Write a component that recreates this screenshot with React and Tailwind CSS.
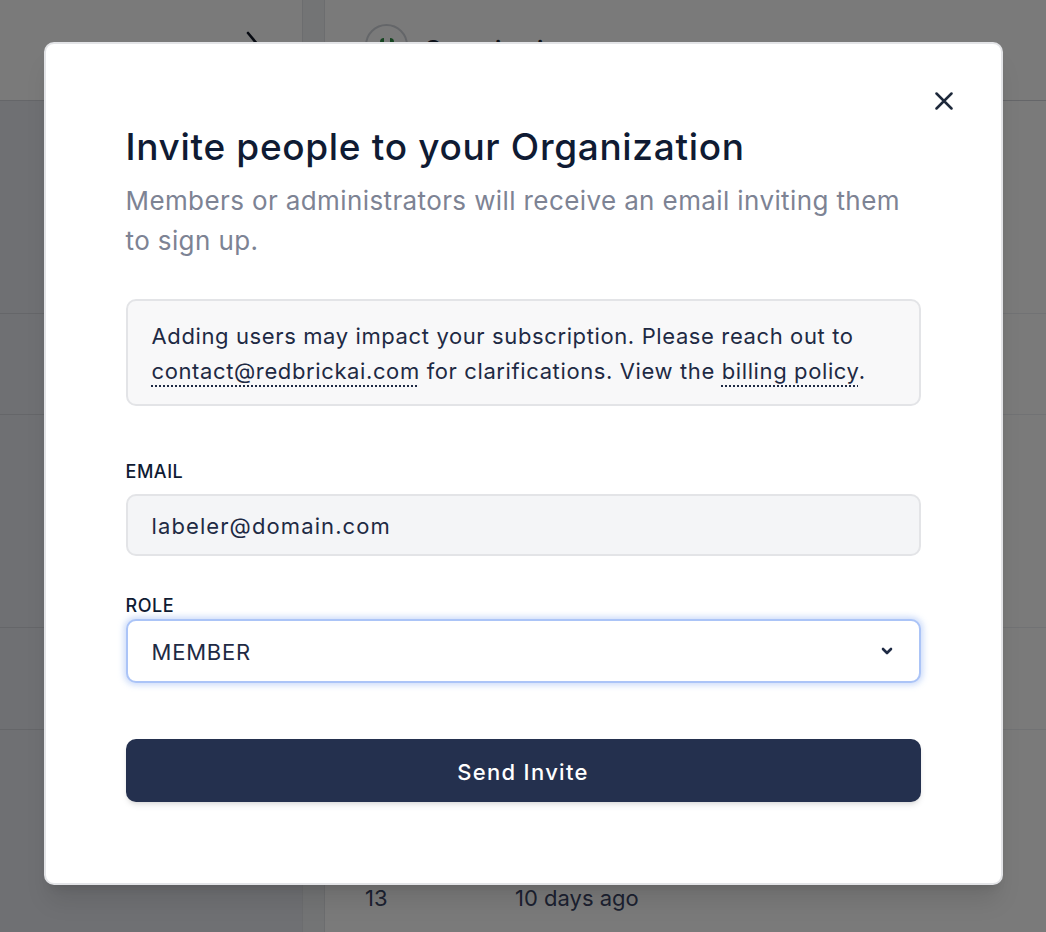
function Backdrop() {
    return (
        <div className="flex h-full">
            <aside className="flex w-[302px] flex-col bg-[#e9ebf1]">
                <div className="flex h-[101px] items-center justify-end border-b border-[#d3d5db] bg-white pr-[42px] pb-[10px]">
                    <svg width="14" height="28" viewBox="0 0 14 28" fill="none">
                        <path d="M2 2l10 12L2 26" stroke="#111827" strokeWidth="2.6" strokeLinecap="round" strokeLinejoin="round" />
                    </svg>
                </div>
                <div className="h-[213px] border-b border-[#d3d5db]" />
                <div className="h-[101px] border-b border-[#d3d5db]" />
                <div className="h-[213px] border-b border-[#d3d5db]" />
                <div className="h-[102px] border-b border-[#d3d5db]" />
                <div className="flex-1" />
            </aside>
            <div className="w-[23px] border-x border-[#e2e4e8] bg-[#f1f2f5]" />
            <main className="flex flex-1 flex-col bg-white">
                <div className="flex h-[101px] items-center gap-4 border-b border-[#d3d5db] pl-[40px] pb-[10px]">
                    <div className="flex h-[43px] w-[43px] items-center justify-center rounded-full border-2 border-[#d1d5db]">
                        <div className="h-[14px] w-[14px] rounded-sm border-x-4 border-[#2f8f46]" />
                    </div>
                    <span className="mt-[10px] text-[24px] font-semibold text-[#1f2937]">Organization</span>
                </div>
                <div className="h-[213px] border-b border-[#eceef2]" />
                <div className="h-[101px] border-b border-[#eceef2]" />
                <div className="h-[213px] border-b border-[#eceef2]" />
                <div className="h-[102px] border-b border-[#eceef2]" />
                <div className="flex flex-1 items-end pb-[17px] pl-[40px] text-[22px] text-[#3b4565]">
                    <span className="w-[150px]">13</span>
                    <span>10 days ago</span>
                </div>
            </main>
        </div>
    )
}

export default function App() {
    return (
        <div className="relative h-[932px] w-full overflow-hidden bg-white font-['Inter',sans-serif]">
            <Backdrop />
            <div className="absolute inset-0 bg-black/[0.52]" />

            <div className="absolute inset-0 flex justify-center pt-[42px]">
                <div className="h-[843px] w-[959px] rounded-[10px] border-2 border-[#e3e4e7] bg-white px-[48px] pt-[48px] shadow-xl">
                    <div className="flex justify-end">
                        <button className="h-[18px] w-[18px]">
                            <svg width="18" height="18" viewBox="0 0 18 18" fill="none">
                                <path d="M1.5 1.5l15 15M16.5 1.5l-15 15" stroke="#1e293b" strokeWidth="2.5" strokeLinecap="round" />
                            </svg>
                        </button>
                    </div>

                    <div className="px-[32px] pt-[15px]">
                        <h2 className="text-[37px] leading-[44px] font-medium tracking-[0.018em] text-[#0f1b33]">
                            Invite people to your Organization
                        </h2>
                        <p className="mt-[12px] text-[26px] leading-[40px] tracking-[0.015em] text-[#7d8394]">
                            Members or administrators will receive an email inviting them to sign up.
                        </p>

                        <div className="mt-[38px] rounded-[10px] border-2 border-[#e3e4e7] bg-[#f8f8f9] px-[24px] pt-[18px] pb-[15px] text-[22px] leading-[35px] tracking-[0.028em] text-[#1e2a44]">
                            Adding users may impact your subscription. Please reach out to
                            <br />
                            <a className="underline decoration-dotted decoration-[1.5px] underline-offset-[6px]">contact@redbrickai.com</a>{' '}
                            for clarifications. View the{' '}
                            <a className="underline decoration-dotted decoration-[1.5px] underline-offset-[6px]">billing policy</a>.
                        </div>

                        <form className="mt-[53px]">
                            <label className="block text-[18px] leading-[26px] font-medium tracking-[0.03em] text-[#0f1b33]">EMAIL</label>
                            <div className="mt-[9px] flex h-[62px] items-center rounded-[10px] border-2 border-[#e3e4e7] bg-[#f4f5f7] px-[24px] pt-[2px] text-[22px] tracking-[0.05em] text-[#1e2a44]">
                                labeler@domain.com
                            </div>

                            <label className="mt-[37px] block text-[18px] leading-[26px] font-medium tracking-[0.03em] text-[#0f1b33]">ROLE</label>
                            <div className="mt-0 flex h-[64px] items-center justify-between rounded-[10px] border-2 border-[#abc4f7] bg-white pl-[24px] pr-[26px] text-[22px] tracking-[0.035em] text-[#1e2a44] shadow-[0_0_6px_2px_rgba(120,160,240,0.4)]">
                                <span className="pt-[2px]">MEMBER</span>
                                <svg width="12" height="8" viewBox="0 0 12 8" fill="none">
                                    <path d="M2 2l4 4 4-4" stroke="#1e2a44" strokeWidth="2.6" strokeLinecap="round" strokeLinejoin="round" />
                                </svg>
                            </div>

                            <button
                                type="button"
                                className="mt-[56px] flex h-[63px] w-full items-center justify-center rounded-[10px] bg-[#24304e] pt-[3px] text-[22px] font-medium tracking-[0.06em] text-white shadow-md"
                            >
                                Send Invite
                            </button>
                        </form>
                    </div>
                </div>
            </div>
        </div>
    )
}
